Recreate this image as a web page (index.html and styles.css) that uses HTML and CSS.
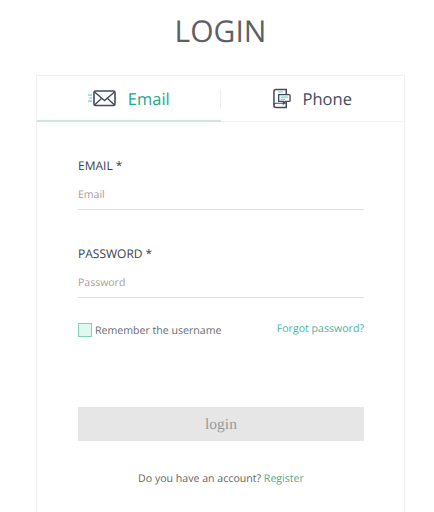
FILE: index.html
```html
<!doctype html>
<html lang="en">
<head>
<meta charset="UTF-8">
<title>Login</title>
<link rel="stylesheet" href="styles.css">
</head>
<body>
<h1 class="title">LOGIN</h1>
<div class="box">
	<div class="tabs">
		<div class="tab tab-on">
			<svg class="tab-icon" width="28" height="18" viewBox="0 0 28 18">
				<path d="M0 6h4M1.500 9h2.500M0 12h4" stroke="#3fd0b0" stroke-width="1.200" fill="none"/>
				<rect x="6" y="2" width="21" height="14.500" rx="1.500" fill="#fff" stroke="#434b5c" stroke-width="1.600"/>
				<path d="M6.500 3l10 8.500 10-8.500M6.500 16l7.500-7M26.500 16l-7.500-7" fill="none" stroke="#434b5c" stroke-width="1.400"/>
			</svg>
			<span>Email</span>
		</div>
		<div class="tab">
			<svg class="tab-icon" width="18" height="21" viewBox="0 0 19 21">
				<path d="M3 1h11v19H3a2 2 0 0 1-2-2V3a2 2 0 0 1 2-2z" fill="#fff" stroke="#434b5c" stroke-width="1.600"/>
				<path d="M1 17.500a2 2 0 0 1 2-2h11" fill="none" stroke="#434b5c" stroke-width="1.200"/>
				<path d="M5.500 3.500h5" stroke="#8fe0cf" stroke-width="1.400"/>
				<path d="M6 6.500h11a1 1 0 0 1 1 1v5a1 1 0 0 1-1 1h-4l-2 2.500v-2.500H6z" fill="#fff" stroke="#434b5c" stroke-width="1.400"/>
				<path d="M8 9h8M8 11.500h5" stroke="#6fdcc4" stroke-width="1.300"/>
			</svg>
			<span>Phone</span>
		</div>
	</div>
	<form class="form">
		<div class="field">
			<label class="field-label">EMAIL *</label>
			<div class="field-input">Email</div>
		</div>
		<div class="field">
			<label class="field-label">PASSWORD *</label>
			<div class="field-input">Password</div>
		</div>
		<div class="options">
			<label class="remember"><span class="check"></span>Remember the username</label>
			<a class="forgot" href="#">Forgot password?</a>
		</div>
		<div class="btn-login">login</div>
		<p class="register">Do you have an account? <a href="#">Register</a></p>
	</form>
</div>
</body>
</html>
```

FILE: styles.css
```css
*{ margin:0; padding:0; box-sizing:border-box;}
a{text-decoration:none;}
html,body{height:512px; overflow:hidden;}
body{
	background:#fff;
	font-family:"Open Sans","Noto Sans",sans-serif;
	color:#555;
	padding:0 29px 0 36px;
	text-rendering:geometricPrecision;
}
.title{
	height:75px;
	padding-top:10px;
	font-size:30px;
	font-weight:400;
	line-height:41px;
	text-align:center;
	color:#5c6066;
}
.box{
	border:1px solid #f0f0f0;
	border-bottom:0;
	height:437px;
}
.tabs{
	display:flex;
	height:46px;
	border-bottom:1px solid #f2f2f2;
}
.tab{
	position:relative;
	flex:1;
	display:flex;
	align-items:center;
	justify-content:center;
	gap:12px;
	font-size:16.500px;
	color:#434b5c;
}
.tab-on{
	margin-bottom:-1px;
	border-bottom:2px solid #cfe6df;
	color:#1fa68f;
}
.tab-on::after{
	content:'';
	position:absolute;
	right:0;
	top:14px;
	height:18px;
	border-right:1px solid #eee;
}
.form{
	padding:0 40px 0 41px;
}
.field{
	padding-top:35px;
	height:88px;
}
.field-label{
	display:block;
	font-size:12px;
	line-height:18px;
	font-weight:500;
	color:#3a3f47;
}
.field-input{
	height:35px;
	padding-top:12px;
	border-bottom:1px solid #e0e0e0;
	font-size:10.500px;
	line-height:16px;
	color:#a59d98;
}
.options{
	display:flex;
	justify-content:space-between;
	padding-top:22px;
	font-size:10.600px;
}
.remember{
	display:flex;
	align-items:flex-start;
	gap:3px;
	margin-top:3px;
	line-height:16px;
	color:#666a70;
}
.check{
	width:14px;
	height:14px;
	background:#e2f7f0;
	border:1px solid #80cfb8;
}
.forgot{
	margin-top:1px;
	line-height:16px;
	color:#4db39f;
}
.btn-login{
	margin-top:68px;
	height:34px;
	background:#e6e6e6;
	font-family:"Liberation Serif",serif;
	font-size:15.500px;
	line-height:35px;
	text-align:center;
	color:#999;
}
.register{
	margin-top:30px;
	font-size:10.600px;
	line-height:16px;
	text-align:center;
	color:#666;
}
.register a{
	color:#4fa98c;
}
```
